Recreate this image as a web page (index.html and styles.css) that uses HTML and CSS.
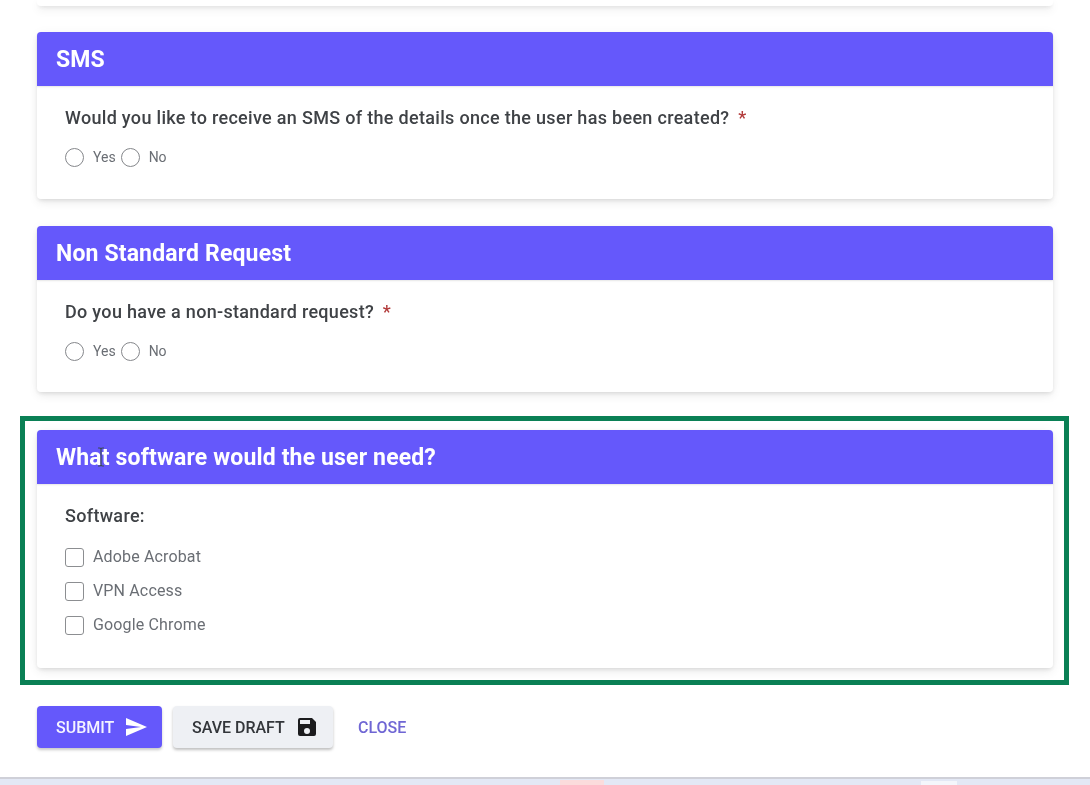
FILE: index.html
```html
<!DOCTYPE html>
<html lang="en">
<head>
<meta charset="utf-8">
<title>Request form</title>
<link rel="stylesheet" href="styles.css">
</head>
<body>
<div class="page">
  <main class="form">
    <div class="card stub"></div>

    <section class="card gap-sms">
      <h2 class="card-head">SMS</h2>
      <div class="card-body">
        <p class="question">Would you like to receive an SMS of the details once the user has been created? <span class="req">*</span></p>
        <div class="radios">
          <label class="opt"><span class="radio"></span>Yes</label>
          <label class="opt"><span class="radio"></span>No</label>
        </div>
      </div>
    </section>

    <section class="card gap-ns">
      <h2 class="card-head">Non Standard Request</h2>
      <div class="card-body">
        <p class="question">Do you have a non-standard request? <span class="req">*</span></p>
        <div class="radios">
          <label class="opt"><span class="radio"></span>Yes</label>
          <label class="opt"><span class="radio"></span>No</label>
        </div>
      </div>
    </section>

    <div class="highlight">
      <section class="card">
        <h2 class="card-head head-cursor">What software would the user need?
          <svg class="ibeam" width="8" height="20" viewBox="0 0 8 20" aria-hidden="true"><path d="M1 1h2l1 1 1-1h2M4 2v16M1 19h2l1-1 1 1h2" fill="none" stroke="#3c4a5a" stroke-width="1.2"/></svg>
        </h2>
        <div class="card-body">
          <p class="question">Software:</p>
          <div class="checks">
            <label class="opt"><span class="check"></span>Adobe Acrobat</label>
            <label class="opt"><span class="check"></span>VPN Access</label>
            <label class="opt"><span class="check"></span>Google Chrome</label>
          </div>
        </div>
      </section>
    </div>

    <div class="actions">
      <button class="btn btn-primary" type="button">SUBMIT
        <svg width="24" height="24" viewBox="0 0 24 24" aria-hidden="true"><path d="M2.01 21 23 12 2.01 3 2 10l15 2-15 2z" fill="#fff"/></svg>
      </button>
      <button class="btn btn-light" type="button">SAVE DRAFT
        <svg width="24" height="24" viewBox="0 0 24 24" aria-hidden="true"><path d="M17 3H5a2 2 0 0 0-2 2v14a2 2 0 0 0 2 2h14a2 2 0 0 0 2-2V7l-4-4zm-5 16a3 3 0 1 1 0-6 3 3 0 0 1 0 6zm3-10H5V5h10v4z" fill="#1c1c1e"/></svg>
      </button>
      <button class="btn btn-text" type="button">CLOSE</button>
    </div>
  </main>
  <div class="desktop">
    <span class="tab-pink"></span>
    <span class="tab-white"></span>
  </div>
</div>
</body>
</html>
```
FILE: styles.css
```css
* { box-sizing: border-box; }
html, body { margin: 0; padding: 0; }
body {
  width: 1090px;
  height: 785px;
  overflow: hidden;
  background: #fff;
  font-family: Roboto, "Liberation Sans", sans-serif;
}
.page {
  height: 785px;
  display: flex;
  flex-direction: column;
  overflow: hidden;
  filter: blur(0.35px);
}
.form {
  flex: 1;
  padding: 0 37px;
  width: 1090px;
}
.card {
  width: 1016px;
  background: #fff;
  border-radius: 4px;
  box-shadow: 0 2px 4px -1px rgba(0,0,0,.1), 0 4px 10px rgba(0,0,0,.07), 0 1px 12px rgba(0,0,0,.04);
}
.stub { height: 6px; border-radius: 0 0 4px 4px; }
.gap-sms { margin-top: 26px; height: 167px; }
.gap-ns { margin-top: 27px; height: 166px; }
.card-head {
  margin: 0;
  height: 54px;
  padding-left: 19px;
  background: #6558fb;
  color: #fff;
  border-radius: 4px 4px 0 0;
  font-size: 23px;
  font-weight: 700;
  line-height: 55px;
  letter-spacing: .15px;
  box-shadow: 0 1px 2px rgba(0,0,0,.1);
}
.head-cursor { position: relative; }
.ibeam { position: absolute; left: 60px; top: 17px; }
.card-body { padding: 20px 28px 0; }
.question {
  margin: 0;
  color: #3f4246;
  font-size: 18px;
  font-weight: 500;
  line-height: 24px;
  letter-spacing: .31px;
}
.req { color: #b23a3a; margin-left: 4px; }
.radios { display: flex; gap: 5px; margin-top: 15px; }
.opt {
  display: flex;
  align-items: center;
  color: #6a6e74;
  font-size: 14px;
  line-height: 24px;
}
.radio {
  width: 19px;
  height: 19px;
  border: 1.6px solid #85878b;
  border-radius: 50%;
  margin-right: 9px;
}
.highlight {
  width: 1049px;
  height: 269px;
  margin: 24px 0 0 -17px;
  padding: 9px 11px 0 12px;
  border: 5px solid #0a8055;
}
.highlight .card { height: 238px; }
.checks { display: flex; flex-direction: column; gap: 10px; margin-top: 17px; }
.checks .opt { font-size: 16px; letter-spacing: .15px; }
.check {
  width: 19px;
  height: 19px;
  border: 1.6px solid #8c8e91;
  border-radius: 3px;
  margin-right: 9px;
}
.actions {
  display: flex;
  align-items: center;
  margin-top: 21px;
}
.btn {
  display: inline-flex;
  align-items: center;
  height: 42px;
  border: 0;
  border-radius: 4px;
  font-family: inherit;
  font-size: 16px;
  font-weight: 500;
  padding: 0;
}
.btn-primary {
  width: 125px;
  padding-left: 19px;
  gap: 10px;
  background: #6558fb;
  color: #f4f3ff;
  box-shadow: 0 2px 3px rgba(0,0,0,.22);
}
.btn-light {
  width: 160px;
  margin-left: 11px;
  padding-left: 19px;
  gap: 10px;
  background: #eef0f4;
  color: #33363a;
  box-shadow: 0 2px 3px rgba(0,0,0,.25);
}
.btn-text {
  margin-left: 25px;
  background: none;
  color: #6f66d4;
}
.desktop {
  height: 8px;
  flex: none;
  position: relative;
  background: #e3e8f5;
  border-top: 2px solid #cfd0d8;
}
.tab-pink {
  position: absolute;
  left: 560px;
  top: 1px;
  width: 44px;
  height: 5px;
  background: #fbdcdc;
}
.tab-white {
  position: absolute;
  left: 921px;
  top: 2px;
  width: 36px;
  height: 4px;
  background: #f4f6fb;
}
```
